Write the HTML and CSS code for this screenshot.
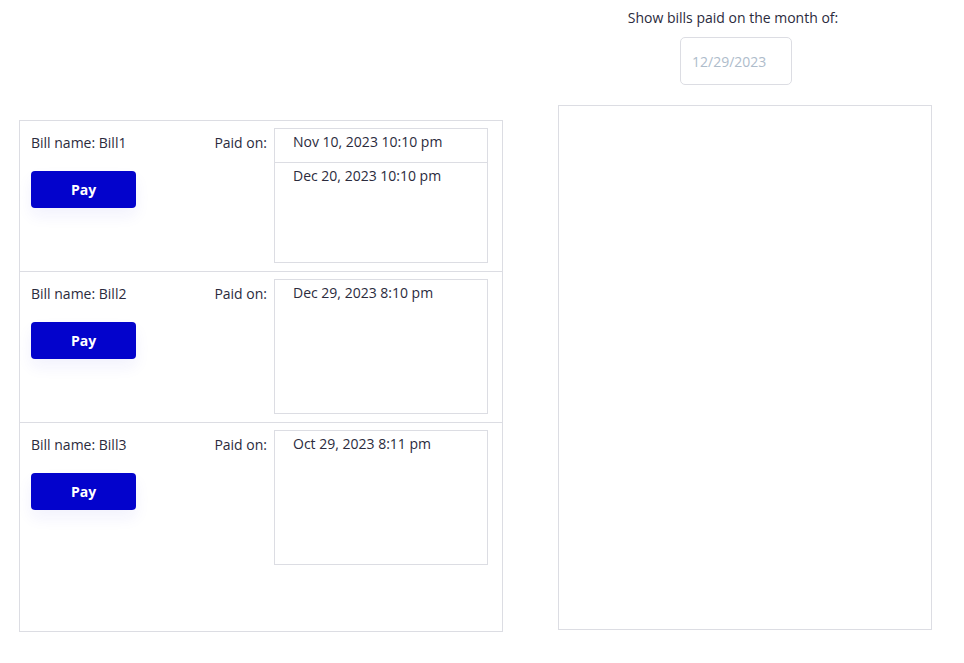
FILE: index.html
```
<!DOCTYPE html>
<html lang="en">
<head>
<meta charset="utf-8">
<title>Bills</title>
<link rel="stylesheet" href="styles.css">
</head>
<body>
<div class="page">
  <section class="bills">
    <div class="bill">
      <div class="bill-main">
        <div class="bill-name">Bill name: Bill1</div>
        <button class="pay-btn">Pay</button>
      </div>
      <div class="paid-label">Paid on:</div>
      <ul class="paid-list">
        <li class="paid-item">Nov 10, 2023 10:10 pm</li>
        <li class="paid-item">Dec 20, 2023 10:10 pm</li>
      </ul>
    </div>
    <div class="bill">
      <div class="bill-main">
        <div class="bill-name">Bill name: Bill2</div>
        <button class="pay-btn">Pay</button>
      </div>
      <div class="paid-label">Paid on:</div>
      <ul class="paid-list">
        <li class="paid-item">Dec 29, 2023 8:10 pm</li>
      </ul>
    </div>
    <div class="bill">
      <div class="bill-main">
        <div class="bill-name">Bill name: Bill3</div>
        <button class="pay-btn">Pay</button>
      </div>
      <div class="paid-label">Paid on:</div>
      <ul class="paid-list">
        <li class="paid-item">Oct 29, 2023 8:11 pm</li>
      </ul>
    </div>
  </section>
  <section class="filter">
    <div class="filter-head">
      <label class="filter-label" for="month">Show bills paid on the month of:</label>
      <input class="month-input" id="month" type="text" placeholder="12/29/2023">
    </div>
    <div class="results"></div>
  </section>
</div>
</body>
</html>
```
FILE: styles.css
```
* { box-sizing: border-box; }
html, body {
  margin: 0;
  padding: 0;
  background: #ffffff;
}
body {
  font-family: "Open Sans", "Noto Sans", sans-serif;
  font-size: 14px;
  line-height: 19px;
  color: #2b2b3d;
}
.page {
  display: flex;
  align-items: flex-start;
  gap: 55px;
  padding-left: 19px;
}
.bills {
  margin-top: 120px;
  width: 484px;
  height: 512px;
  border: 1px solid #dcdde3;
}
.bill {
  display: flex;
  align-items: flex-start;
  padding: 7px 14px 8px 11px;
  border-bottom: 1px solid #dcdde3;
}
.bill:last-child {
  border-bottom: none;
}
.bill-main {
  flex: 1;
  display: flex;
  flex-direction: column;
  align-items: flex-start;
  padding-top: 5px;
}
.pay-btn {
  margin-top: 19px;
  width: 105px;
  height: 37px;
  border: none;
  border-radius: 4px;
  background: #0303cc;
  color: #ffffff;
  font-family: "Open Sans", "Noto Sans", sans-serif;
  font-size: 14px;
  font-weight: 700;
  box-shadow: 0 8px 16px rgba(40, 40, 220, 0.06);
  cursor: pointer;
}
.paid-label {
  padding-top: 5px;
  margin-right: 7px;
}
.paid-list {
  list-style: none;
  margin: 0;
  padding: 0;
  width: 214px;
  height: 135px;
  border: 1px solid #dcdde3;
}
.paid-item {
  height: 34px;
  padding: 3px 18px 0 18px;
}
.paid-item + .paid-item {
  border-top: 1px solid #dcdde3;
}
.paid-item:first-child {
  height: 33px;
}
.filter {
  width: 374px;
}
.filter-head {
  display: flex;
  flex-direction: column;
  align-items: center;
  padding-right: 24px;
  padding-top: 8px;
}
.month-input {
  margin-top: 10px;
  margin-left: 6px;
  width: 112px;
  height: 48px;
  border: 1px solid #dcdde3;
  border-radius: 5px;
  padding: 0 11px;
  font-family: "Open Sans", "Noto Sans", sans-serif;
  font-size: 14px;
  color: #2b2b3d;
  outline: none;
}
.month-input::placeholder {
  color: #aebccb;
}
.results {
  margin-top: 20px;
  height: 525px;
  border: 1px solid #dcdde3;
}
```
